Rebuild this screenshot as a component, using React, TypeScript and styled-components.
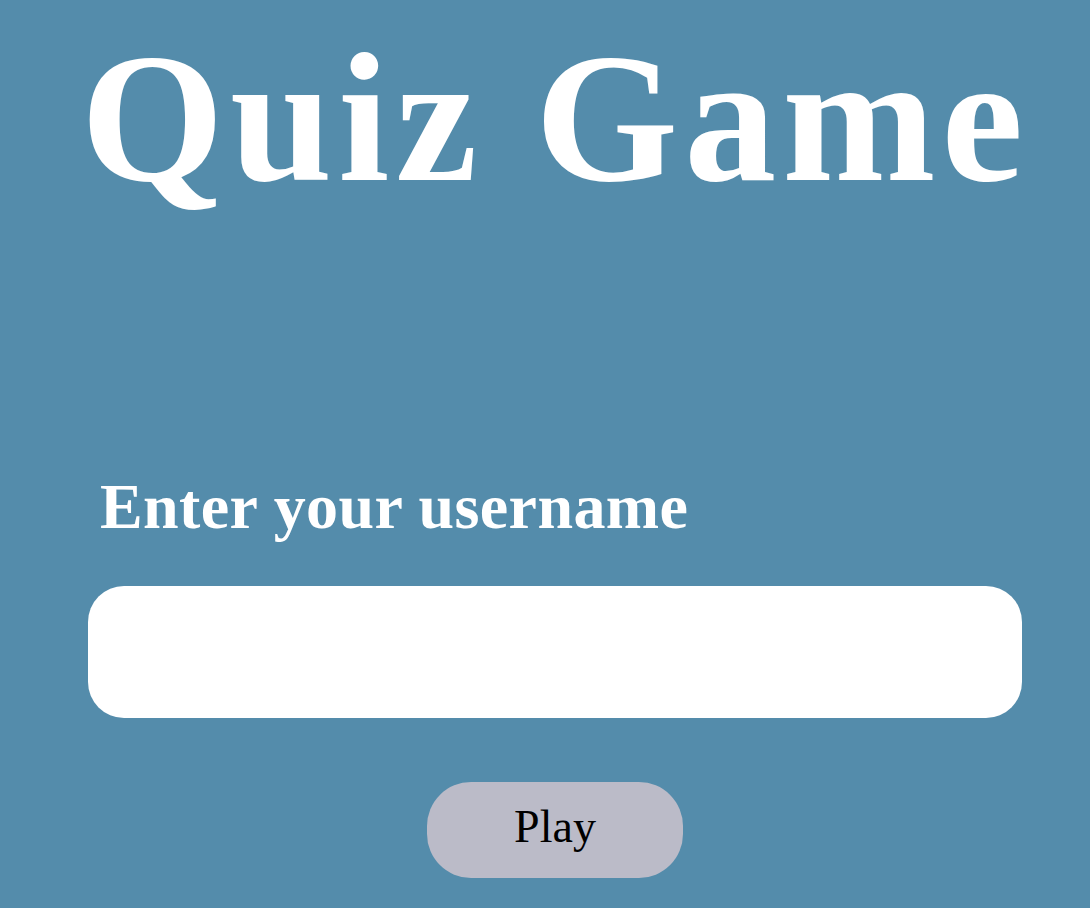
import React from "react";
import styled, { createGlobalStyle } from "styled-components";

const Global = createGlobalStyle`
  html, body { margin: 0; padding: 0; background: #548cab; }
  body { font-family: "Liberation Serif", "DejaVu Serif", serif; }
`;

const Page = styled.main`
  width: 934px;
  margin-left: 88px;
  padding-top: 8px;
  display: flex;
  flex-direction: column;
`;

const Title = styled.h1`
  margin: 0 -40px;
  text-align: center;
  white-space: nowrap;
  color: #ffffff;
  font-family: "Liberation Serif", serif;
  font-weight: 700;
  font-size: 184px;
  line-height: 220px;
  letter-spacing: 6px;
`;

const Form = styled.form`
  margin-top: 244px;
  display: flex;
  flex-direction: column;
`;

const Label = styled.label`
  color: #ffffff;
  font-family: "Liberation Serif", serif;
  font-weight: 700;
  font-size: 64px;
  line-height: 70px;
  letter-spacing: 0.4px;
  padding-left: 12px;
  white-space: nowrap;
`;

const Input = styled.input`
  margin-top: 44px;
  height: 132px;
  box-sizing: border-box;
  border: none;
  border-radius: 36px;
  background: #ffffff;
  outline: none;
  font-family: "Liberation Serif", serif;
  font-size: 40px;
  padding: 0 30px;
`;

const Play = styled.button`
  align-self: center;
  margin-top: 64px;
  width: 256px;
  height: 96px;
  padding: 0 0 8px;
  border: none;
  border-radius: 44px;
  background: #bbbbc8;
  color: #000000;
  font-family: "Liberation Serif", serif;
  font-size: 46px;
`;

export default function App() {
  return (
    <>
      <Global />
      <Page>
        <Title>Quiz Game</Title>
        <Form onSubmit={(e) => e.preventDefault()}>
          <Label htmlFor="username">Enter your username</Label>
          <Input id="username" type="text" />
          <Play type="submit">Play</Play>
        </Form>
      </Page>
    </>
  );
}
